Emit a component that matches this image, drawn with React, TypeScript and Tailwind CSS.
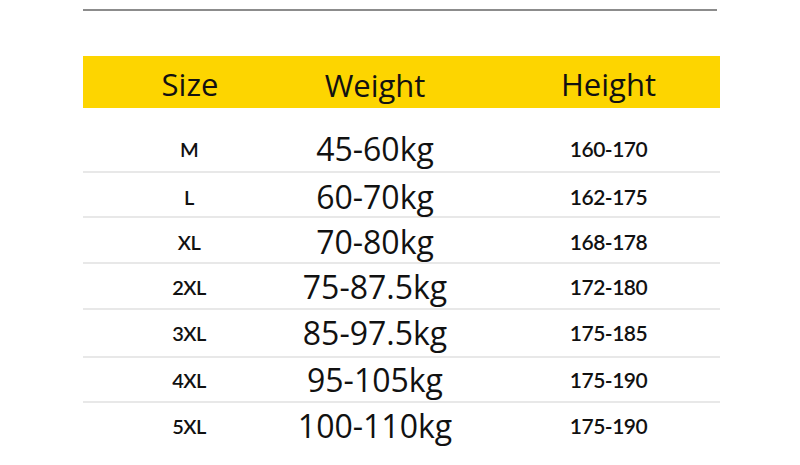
const rows = [
    { size: 'M', weight: '45-60kg', height: '160-170', h: 'h-[65px] pt-[18px]' },
    { size: 'L', weight: '60-70kg', height: '162-175', h: 'h-[45px] pt-[4px]' },
    { size: 'XL', weight: '70-80kg', height: '168-178', h: 'h-[46px] pt-[4px]' },
    { size: '2XL', weight: '75-87.5kg', height: '172-180', h: 'h-[46px] pt-[2px]' },
    { size: '3XL', weight: '85-97.5kg', height: '175-185', h: 'h-[48px]' },
    { size: '4XL', weight: '95-105kg', height: '175-190', h: 'h-[45px]' },
    { size: '5XL', weight: '100-110kg', height: '175-190', h: 'h-[45px]' },
];

export default function App() {
    return (
        <div className="w-[800px] h-[465px] bg-white overflow-hidden">
            <div className="ml-[83px] w-[637px]">
                {/* top rule */}
                <div className="mt-[9px] h-[2px] w-[634px] bg-[#8c8c8c]" />

                {/* yellow header */}
                <div className="mt-[45px] h-[52px] bg-[#fdd500] grid grid-cols-[212px_160px_1fr] items-center pt-[3px] font-['Open_Sans',sans-serif] text-[31px] text-[#111]">
                    <div className="text-center pl-[2px]">Size</div>
                    <div className="text-center pt-[3px]">Weight</div>
                    <div className="text-center pl-[42px]">Height</div>
                </div>

                {/* rows */}
                {rows.map((r, i) => (
                    <div
                        key={r.size}
                        className={`grid grid-cols-[212px_160px_1fr] items-center ${r.h} ${i < rows.length - 1 ? 'border-b-2 border-[#e8e8e8]' : ''}`}
                    >
                        <div className="text-center font-['Lato',sans-serif] font-semibold text-[20px] text-[#111] tracking-[-0.5px]">{r.size}</div>
                        <div className="text-center font-['Open_Sans',sans-serif] text-[32px] text-[#111] leading-none">{r.weight}</div>
                        <div className="text-center pl-[42px] font-['Lato',sans-serif] font-semibold text-[21px] text-[#111] tracking-[-0.5px]">{r.height}</div>
                    </div>
                ))}
            </div>
        </div>
    );
}
